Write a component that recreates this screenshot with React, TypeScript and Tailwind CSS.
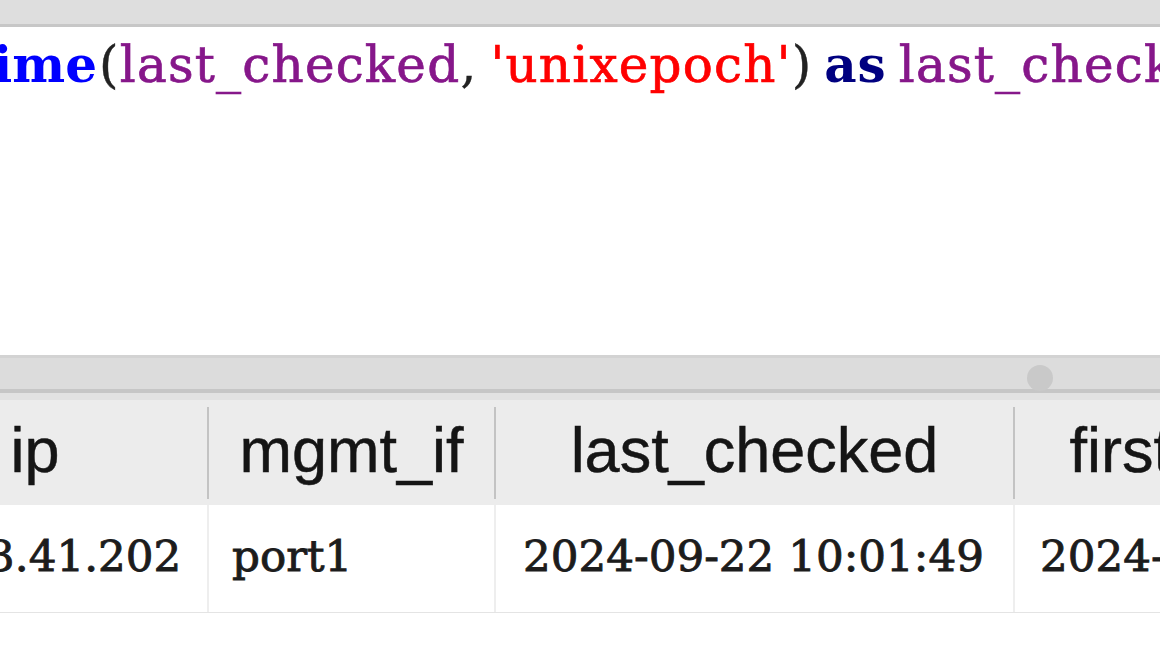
const codeFont = { fontFamily: '"DejaVu Serif", serif' };

function HeaderCell({ label, width, className = '' }: { label: string; width: string; className?: string }) {
  return (
    <div className={`${width} ${className} shrink-0 flex justify-center pt-[19px] overflow-hidden`}>
      <span className="whitespace-nowrap text-[63px] leading-none text-[#151515] [-webkit-text-stroke:0.5px_#151515] font-['Liberation_Sans',Arial,sans-serif]">
        {label}
      </span>
    </div>
  );
}

function DataCell({ value, width, pad, className = '' }: { value: string; width: string; pad: string; className?: string }) {
  return (
    <div className={`${width} ${pad} ${className} shrink-0 pt-[30px] overflow-hidden`}>
      <span className="whitespace-nowrap text-[43.6px] leading-none text-[#1c1c1c] [-webkit-text-stroke:0.9px_#1c1c1c] font-['DejaVu_Serif',serif]">
        {value}
      </span>
    </div>
  );
}

export default function App() {
  return (
    <div className="w-[1160px] h-[665px] overflow-hidden bg-white flex flex-col">
      {/* window chrome above the editor */}
      <div className="h-[27px] shrink-0 bg-[#dedede] border-b-[3px] border-[#c7c7c7]" />

      {/* sql editor */}
      <div className="h-[328px] shrink-0 bg-white overflow-hidden pt-[8px]">
        <div className="flex whitespace-nowrap text-[50px] leading-[60px] tracking-[1.2px]" style={codeFont}>
          <div className="w-[97px] shrink-0 flex justify-end tracking-normal">
            <span className="font-bold text-[#0000ff]">datetime</span>
          </div>
          <span className="ml-[2px] text-[#222] [-webkit-text-stroke:0.4px_#222]">(</span>
          <span className="text-[#86178a] [-webkit-text-stroke:0.7px_#86178a]">last_checked</span>
          <span className="text-[#222] [-webkit-text-stroke:0.4px_#222]">,</span>
          <span className="w-[13px] shrink-0" />
          <span className="text-[#ff0000] [-webkit-text-stroke:0.7px_#ff0000]">'unixepoch'</span>
          <span className="tracking-normal text-[#222] [-webkit-text-stroke:0.4px_#222]">)</span>
          <span className="w-[13px] shrink-0" />
          <span className="font-bold tracking-[1px] text-[#000080]">as</span>
          <span className="ml-[12px] text-[#86178a] [-webkit-text-stroke:0.7px_#86178a]">last_checked</span>
        </div>
      </div>

      {/* splitter */}
      <div className="relative shrink-0 h-[45px] flex flex-col">
        <div className="h-[3px] bg-[#d3d3d3]" />
        <div className="h-[31px] bg-[#dcdcdc]" />
        <div className="h-[4px] bg-[#c6c6c6]" />
        <div className="h-[7px] bg-[#e2e2e2]" />
        <div className="absolute left-[1027px] top-[10px] w-[26px] h-[26px] rounded-full bg-[#c9c9c9]" />
      </div>

      {/* results header */}
      <div className="h-[105px] shrink-0 bg-[#ececec] flex items-stretch">
        <HeaderCell label="ip" width="w-[344px]" className="-ml-[137px]" />
        <div className="w-[2px] shrink-0 self-center h-[92px] bg-[#c3c3c3]" />
        <HeaderCell label="mgmt_if" width="w-[285px]" />
        <div className="w-[2px] shrink-0 self-center h-[92px] bg-[#c3c3c3]" />
        <HeaderCell label="last_checked" width="w-[517px]" />
        <div className="w-[2px] shrink-0 self-center h-[92px] bg-[#c3c3c3]" />
        <HeaderCell label="first_checked" width="w-[480px]" />
      </div>

      {/* results row */}
      <div className="h-[108px] shrink-0 bg-white flex border-b border-[#e4e4e4]">
        <DataCell value="10.13.41.202" width="w-[344px]" pad="pl-[27px]" className="-ml-[137px]" />
        <div className="w-[2px] shrink-0 bg-[#eeeeee]" />
        <DataCell value="port1" width="w-[285px]" pad="pl-[23px]" />
        <div className="w-[2px] shrink-0 bg-[#eeeeee]" />
        <DataCell value="2024-09-22 10:01:49" width="w-[517px]" pad="pl-[27px]" />
        <div className="w-[2px] shrink-0 bg-[#eeeeee]" />
        <DataCell value="2024-09-20 08:12:31" width="w-[480px]" pad="pl-[25px]" />
      </div>

      <div className="flex-1 bg-white" />
    </div>
  );
}
